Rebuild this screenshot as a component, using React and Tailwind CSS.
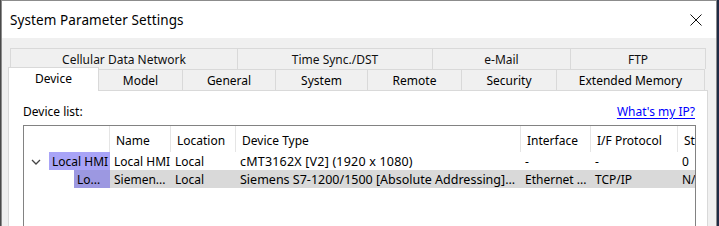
import React from "react";

const font = { fontFamily: '"Noto Sans", "Open Sans", sans-serif' };

function TopTab({ w, label, last }) {
  return (
    <div
      className={`flex items-center justify-center pt-[1px] border-t border-l border-[#d9d9d9] ${last ? "border-r" : ""}`}
      style={{ width: w }}
    >
      {label}
    </div>
  );
}

export default function App() {
  const topTabs = [
    ["Cellular Data Network", 227],
    ["Time Sync./DST", 195],
    ["e-Mail", 138],
    ["FTP", 136],
  ];
  const bottomTabs = [
    ["Model", 84],
    ["General", 93],
    ["System", 92],
    ["Remote", 94],
    ["Security", 95],
    ["Extended Memory", 149],
  ];
  return (
    <div
      className="w-[719px] h-[226px] overflow-hidden flex bg-[#1f2b45] text-[12px] text-black leading-none"
      style={font}
    >
      <div className="w-[1px] h-full bg-[#4a4a4a]" />
      <div className="w-[716px] h-full flex flex-col border-t border-l border-r border-[#8c8c8c] bg-[#f0f0f0] overflow-hidden">
        {/* title bar */}
        <div className="h-[37px] shrink-0 bg-white flex items-center justify-between pl-[8px] pr-[14px] pt-[2px]">
          <span className="text-[13.5px] tracking-[0.1px] text-black">System Parameter Settings</span>
          <svg width="12" height="12" viewBox="0 0 12 12" className="-mt-[2px]">
            <path d="M0.5 0.5 L11.5 11.5 M11.5 0.5 L0.5 11.5" stroke="#111" strokeWidth="1" />
          </svg>
        </div>
        {/* body */}
        <div className="flex-1 pt-[10px] pl-[6px]">
          <div className="w-[700px] flex flex-col">
            <div className="ml-[2px] w-[696px] h-[21px] flex text-[#111]">
              {topTabs.map(([l, w], i) => (
                <TopTab key={l} label={l} w={w} last={i === topTabs.length - 1} />
              ))}
            </div>
            <div className="ml-[2px] w-[696px] h-[21px] flex">
              <div className="relative z-10 -ml-[2px] -mt-[2px] h-[24px] w-[91px] shrink-0 bg-white border-t border-l border-r border-[#d9d9d9] flex items-center justify-center pb-[1px]">
                Device
              </div>
              {bottomTabs.map(([l, w], i) => (
                <div
                  key={l}
                  className={`shrink-0 flex items-center justify-center pt-[2px] border-t border-[#d9d9d9] ${i === 0 ? "" : "border-l"} ${i === bottomTabs.length - 1 ? "border-r" : ""}`}
                  style={{ width: i === 0 ? w - 1 : w }}
                >
                  {l}
                </div>
              ))}
            </div>
            {/* panel */}
            <div className="h-[140px] bg-white border border-[#d9d9d9] pl-[14px] pr-[12px]">
              <div className="h-[34px] flex items-center justify-between pt-[12px] pb-[5px]">
                <span>Device list:</span>
                <span className="text-[#0000ff] underline underline-offset-2">What's my IP?</span>
              </div>
              <div className="w-[673px] h-[120px] border border-[#828282] overflow-hidden">
                <div className="flex h-[26px] w-[700px]">
                  <div className="w-[85px] shrink-0" />
                  {[
                    ["Name", 61],
                    ["Location", 65],
                    ["Device Type", 285],
                    ["Interface", 70],
                    ["I/F Protocol", 87],
                    ["Status", 60],
                  ].map(([l, w]) => (
                    <div key={l} className="shrink-0 border-l border-[#e5e5e5] pl-[6px] pt-[3px] flex items-center whitespace-nowrap" style={{ width: w }}>
                      {l}
                    </div>
                  ))}
                </div>
                {/* row 1 */}
                <div className="flex h-[18px] w-[700px] items-center whitespace-nowrap">
                  <div className="w-[86px] shrink-0 h-full flex items-center">
                    <svg width="10" height="6" viewBox="0 0 10 6" className="ml-[7px] mt-[1px]">
                      <path d="M1 1 L5 5 L9 1" fill="none" stroke="#444" strokeWidth="1.3" />
                    </svg>
                    <div className="ml-[8px] h-full flex-1 bg-[#a9a4f7] flex items-center pl-[3px] pt-[2px]">Local HMI</div>
                  </div>
                  <div className="flex items-center h-full pt-[2px]">
                    <div className="w-[61px] shrink-0 pl-[4px]">Local HMI</div>
                    <div className="w-[65px] shrink-0 pl-[4px]">Local</div>
                    <div className="w-[285px] shrink-0 pl-[4px] text-[12.5px] tracking-[0.2px]">cMT3162X [V2] (1920 x 1080)</div>
                    <div className="w-[70px] shrink-0 pl-[4px]">-</div>
                    <div className="w-[87px] shrink-0 pl-[4px]">-</div>
                    <div className="w-[40px] shrink-0 pl-[4px]">0</div>
                  </div>
                </div>
                {/* row 2 */}
                <div className="flex h-[18px] w-[700px] items-center whitespace-nowrap">
                  <div className="w-[86px] shrink-0 h-full flex">
                    <div className="ml-[50px] h-full flex-1 bg-[#9c98e1] flex items-center pl-[3px] pt-[2px]">Lo...</div>
                  </div>
                  <div className="flex-1 h-full bg-[#d9d9d9] flex items-center pt-[2px]">
                    <div className="w-[61px] shrink-0 pl-[4px]">Siemen...</div>
                    <div className="w-[65px] shrink-0 pl-[4px]">Local</div>
                    <div className="w-[285px] shrink-0 pl-[4px] text-[12.5px]">Siemens S7-1200/1500 [Absolute Addressing]...</div>
                    <div className="w-[70px] shrink-0 pl-[4px]">Ethernet ...</div>
                    <div className="w-[87px] shrink-0 pl-[4px]">TCP/IP</div>
                    <div className="w-[40px] shrink-0 pl-[4px]">N/A</div>
                  </div>
                </div>
              </div>
            </div>
          </div>
        </div>
      </div>
      <div className="w-[2px] h-full bg-[#1f2b45]" />
    </div>
  );
}
